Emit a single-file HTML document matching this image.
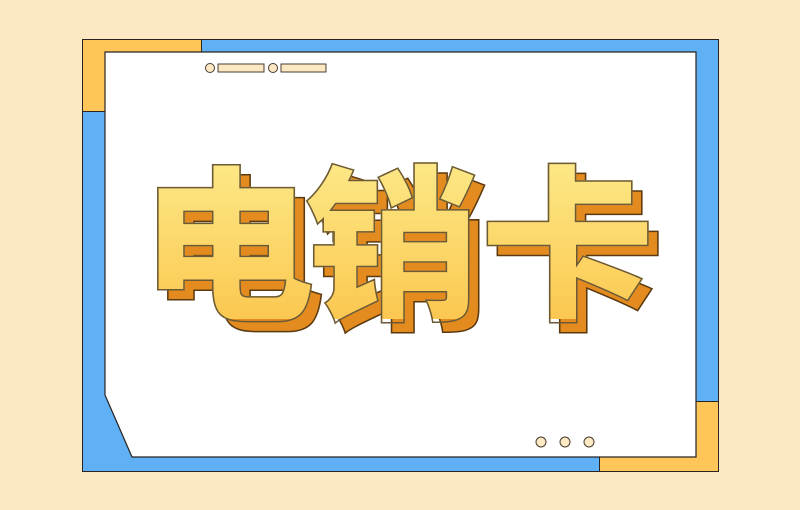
<!DOCTYPE html>
<html><head><meta charset="utf-8"><style>
html,body{margin:0;padding:0}
body{width:800px;height:510px;background:#fde8c4;position:relative;overflow:hidden}
.a{position:absolute}
.t{position:absolute;top:151px;font-family:"Noto Sans CJK SC",sans-serif;font-weight:900;font-size:168px;line-height:1;white-space:nowrap;transform-origin:0 0}
.sh{color:#e38b1f;-webkit-text-stroke:1.5px #5a3a10;transform:translate(10px,10px) scaleX(1.04)}
.fg{background:linear-gradient(#fdea8a,#fbc851);-webkit-background-clip:text;background-clip:text;color:transparent;-webkit-text-stroke:1.5px #6b5a35;transform:scaleX(1.04)}
</style></head><body>
<div class="a" style="left:82px;top:39px;width:635px;height:431px;background:#5fb0f5;border:1.5px solid #2a2320"></div>
<div class="a" style="left:82px;top:39px;width:118px;height:71px;background:#fec658;border:1.5px solid #2a2320;border-right-width:1px;border-bottom-width:1px"></div>
<div class="a" style="left:599px;top:401px;width:118px;height:69px;background:#fec658;border:1.5px solid #2a2320;border-left-width:1px;border-top-width:1px"></div>
<svg class="a" style="left:0;top:0" width="800" height="510"><polygon points="105,52 696,52 696,457 132,457 105,395" fill="#fff" stroke="#2a2320" stroke-width="1.2"/>
<g fill="#fde8c4" stroke="#4a3c30" stroke-width="1"><circle cx="210" cy="68" r="4.5"/><rect x="218" y="64" width="46" height="8"/><circle cx="273" cy="68" r="4.5"/><rect x="281" y="64" width="45" height="8"/>
<circle cx="541" cy="442" r="5"/><circle cx="565" cy="442" r="5"/><circle cx="589" cy="442" r="5"/></g></svg>
<div class="t sh" style="left:140px">电</div>
<div class="t sh" style="left:305px">销</div>
<div class="t sh" style="left:480px">卡</div>
<div class="t fg" style="left:140px">电</div>
<div class="t fg" style="left:305px">销</div>
<div class="t fg" style="left:480px">卡</div>
</body></html>
